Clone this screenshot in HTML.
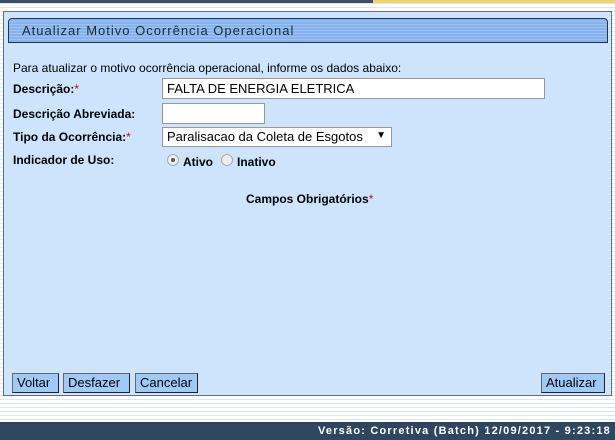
<!DOCTYPE html>
<html><head><meta charset="utf-8"><style>
*{margin:0;padding:0;box-sizing:border-box}
body{width:615px;height:440px;overflow:hidden;position:relative;font-family:"Liberation Sans",Arial,sans-serif;font-size:12px;color:#000;
background:repeating-linear-gradient(to bottom,#fff 0,#fff 3px,#dfe5ec 3px,#dfe5ec 4px);}
.topl{position:absolute;left:0;top:0;width:373px;height:3px;background:#3a5068}
.topy{position:absolute;left:373px;top:0;width:242px;height:3px;background:#f3d36a}
.panel{position:absolute;left:3px;top:11px;width:609px;height:385px;background:#cde4fc;border:1px solid #5c6f86}
.hdr{position:absolute;left:8px;top:18px;width:600px;height:25px;border:1px solid #23354a;border-radius:4px 4px 0 0;
background:repeating-linear-gradient(to bottom,#86b3ec 0,#86b3ec 2px,#9ec3f2 2px,#9ec3f2 3px);}
.hdr span{position:absolute;left:13px;top:4px;font-size:13px;letter-spacing:1px;color:#1a2a3a}
.t{position:absolute;white-space:nowrap}
b{font-weight:bold}
.r{color:#d00}
.in{position:absolute;background:#fff;border:1px solid #999;height:21px;font-size:13px;padding:2px 4px}
.btn{position:absolute;top:373px;height:20px;background:#9fcaf7;border:1px solid #666;border-right-color:#222;border-bottom-color:#222;font-size:13px;padding:1px 4px;line-height:16px}
.rad{position:absolute;width:12px;height:12px;border-radius:50%;border:1px solid #aaa;background:#eee}
.foot{position:absolute;left:0;top:422px;width:615px;height:18px;background:#2f4660;color:#fff;font-weight:bold;font-size:11px;letter-spacing:1.2px;text-align:right;padding:3px 4px 0 0}
</style></head><body>
<div class="topl"></div><div class="topy"></div>
<div class="panel"></div>
<div class="hdr"><span>Atualizar Motivo Ocorrência Operacional</span></div>
<div class="t" style="left:13px;top:61px">Para atualizar o motivo ocorrência operacional, informe os dados abaixo:</div>
<div class="t" style="left:13px;top:82px"><b>Descrição:</b><span class="r">*</span></div>
<div class="in" style="left:162px;top:78px;width:383px">FALTA DE ENERGIA ELETRICA</div>
<div class="t" style="left:13px;top:107px"><b>Descrição Abreviada:</b></div>
<div class="in" style="left:162px;top:103px;width:103px"></div>
<div class="t" style="left:13px;top:130px"><b>Tipo da Ocorrência:</b><span class="r">*</span></div>
<div class="in" style="left:162px;top:127px;width:230px;height:20px;padding-top:1px">Paralisacao da Coleta de Esgotos <span style="position:absolute;right:5px;top:2px;font-size:10px">▼</span></div>
<div class="t" style="left:13px;top:153px"><b>Indicador de Uso:</b></div>
<div class="rad" style="left:167px;top:154px"><div style="width:4px;height:4px;border-radius:50%;background:#555;margin:3px"></div></div>
<div class="t" style="left:183px;top:155px"><b>Ativo</b></div>
<div class="rad" style="left:221px;top:154px"></div>
<div class="t" style="left:237px;top:155px"><b>Inativo</b></div>
<div class="t" style="left:246px;top:192px"><b>Campos Obrigatórios</b><span class="r">*</span></div>
<div class="btn" style="left:12px;width:47px">Voltar</div>
<div class="btn" style="left:63px;width:67px">Desfazer</div>
<div class="btn" style="left:135px;width:63px">Cancelar</div>
<div class="btn" style="left:541px;width:64px">Atualizar</div>
<div class="foot">Versão: Corretiva (Batch) 12/09/2017 - 9:23:18</div>
</body></html>
